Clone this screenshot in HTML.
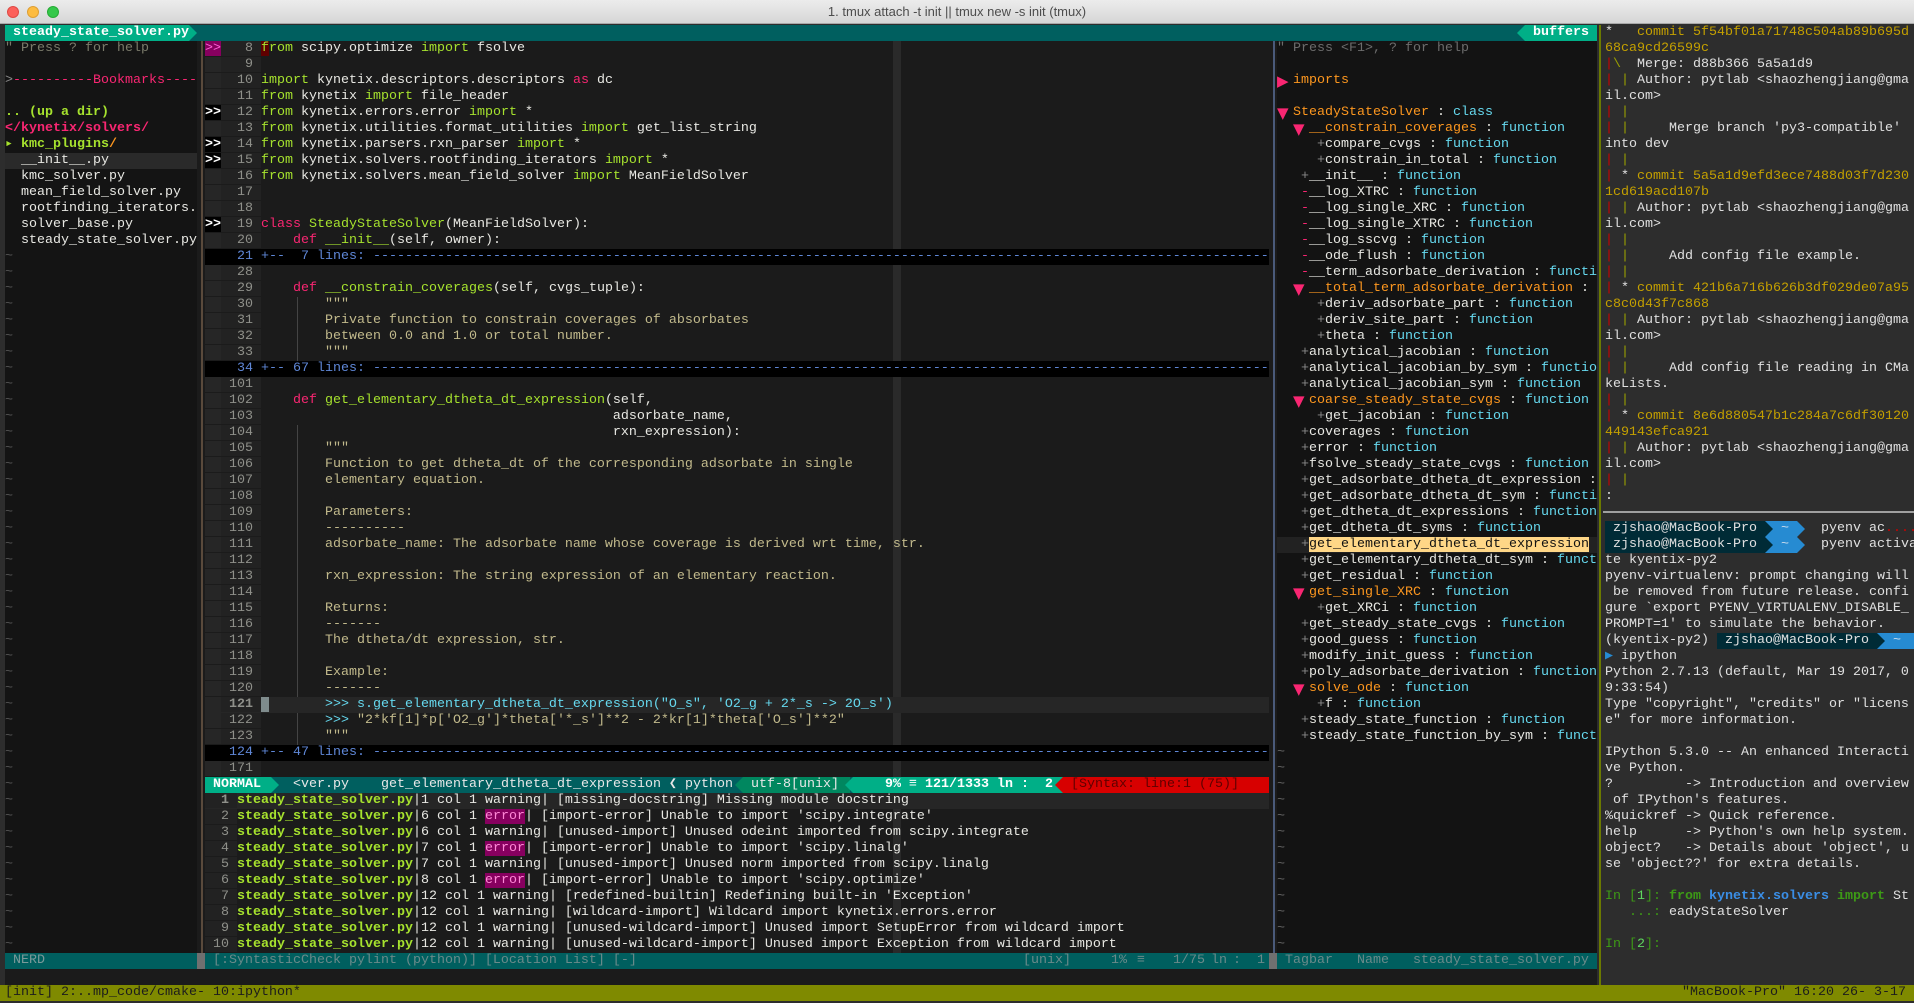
<!DOCTYPE html>
<html><head><meta charset="utf-8"><style>
*{margin:0;padding:0;box-sizing:border-box}
body{width:1914px;height:1003px;background:#2d2d2d;overflow:hidden;position:relative;font-family:"Liberation Mono","DejaVu Sans Mono",monospace;font-size:13.333px;line-height:16px;color:#e8e8e3}
.a{position:absolute}
.l{height:16px;white-space:pre;overflow:hidden}
i{font-style:normal}
.g{color:#a6e22e}.p{color:#f92672}.c{color:#66d9ef}.d{color:#c2ba8c}.o{color:#fd971f}.m{color:#7a7a6a}.gr{color:#8a8a8a}.b{font-weight:bold}
.s{background:#262626}
.n{background:#222;color:#8f908a}
.f{background:#000;color:#5f87d7}
.f .n{background:#000;color:#5f87d7}
.tri{display:inline-block;width:16px;color:#f92672;font-size:15px;line-height:16px;vertical-align:top;font-family:"DejaVu Sans",sans-serif}
.y{color:#c4a000}.r{color:#cc0000}.gg{color:#9aa000}
</style></head><body>
<!-- title bar -->
<div class="a" style="left:0;top:0;width:1914px;height:24px;background:linear-gradient(#ececec,#d6d6d6);border-bottom:1px solid #a8a8a8"></div>
<div class="a" style="left:7px;top:6px;width:12px;height:12px;border-radius:50%;background:#fc605b;border:1px solid #de4a45"></div>
<div class="a" style="left:27px;top:6px;width:12px;height:12px;border-radius:50%;background:#fdbc40;border:1px solid #de9f34"></div>
<div class="a" style="left:47px;top:6px;width:12px;height:12px;border-radius:50%;background:#34c84a;border:1px solid #27aa35"></div>
<div class="a" style="left:0;top:4px;width:1914px;text-align:center;font-family:'Liberation Sans',sans-serif;font-size:13px;color:#4d4d4d">1. tmux attach -t init || tmux new -s init (tmux)</div>

<!-- vim pane backgrounds -->
<div class="a" style="left:5px;top:25px;width:1592px;height:944px;background:#1b1b1b"></div>
<div class="a" style="left:5px;top:41px;width:192px;height:912px;background:#141414"></div>
<div class="a" style="left:1277px;top:41px;width:320px;height:912px;background:#131313"></div>
<div class="a" style="left:201px;top:41px;width:2px;height:912px;background:#5a4a3c"></div>
<div class="a" style="left:1273px;top:41px;width:2px;height:912px;background:#4a5a7a"></div>
<div class="a" style="left:893px;top:41px;width:8px;height:912px;background:#2a2a2a"></div>
<div class="a" style="left:297px;top:297px;width:1px;height:64px;background:#444"></div>
<div class="a" style="left:297px;top:425px;width:1px;height:320px;background:#444"></div>

<!-- tab line -->
<div class="a" style="left:5px;top:25px;width:1592px;height:16px;background:#005f5f"></div>
<div class="a l b" style="left:5px;top:25px;width:192px;background:#00af87;color:#fff;clip-path:polygon(0 0,184px 0,192px 8px,184px 16px,0 16px)"> steady_state_solver.py</div>
<div class="a l b" style="left:1517px;top:25px;width:80px;background:#00af87;color:#fff;clip-path:polygon(8px 0,80px 0,80px 16px,8px 16px,0 8px)">  buffers</div>

<!-- NERDTree -->
<div class="a" style="left:5px;top:41px;width:192px">
<div class="l m">" Press ? for help</div>
<div class="l"></div>
<div class="l"><i class="gr">&gt;</i><i class="p">----------Bookmarks----</i></div>
<div class="l"></div>
<div class="l g b">.. (up a dir)</div>
<div class="l p b">&lt;/kynetix/solvers/</div>
<div class="l g b">▸ kmc_plugins<i class="o">/</i></div>
<div class="l" style="background:#2a2a2a">  __init__.py</div>
<div class="l">  kmc_solver.py</div>
<div class="l">  mean_field_solver.py</div>
<div class="l">  rootfinding_iterators.</div>
<div class="l">  solver_base.py</div>
<div class="l">  steady_state_solver.py</div>
<div class="l" style="color:#555;height:704px;white-space:pre-line">~
~
~
~
~
~
~
~
~
~
~
~
~
~
~
~
~
~
~
~
~
~
~
~
~
~
~
~
~
~
~
~
~
~
~
~
~
~
~
~
~
~
~
~
</div>
</div>

<!-- editor -->
<div class="a" style="left:205px;top:41px;width:1064px;overflow:hidden">
<div class="l"><i class="s" style="background:#87005f;color:#ff5fd7">&gt;&gt;</i><i class="n">   8 </i><i class="g" style="background:#5f0000">f</i><i class="g">rom</i> scipy.optimize <i class="g">import</i> fsolve</div>
<div class="l"><i class="s">  </i><i class="n">   9 </i></div>
<div class="l"><i class="s">  </i><i class="n">  10 </i><i class="g">import</i> kynetix.descriptors.descriptors <i class="p">as</i> dc</div>
<div class="l"><i class="s">  </i><i class="n">  11 </i><i class="g">from</i> kynetix <i class="g">import</i> file_header</div>
<div class="l"><i class="s b" style="background:#000;color:#fff">&gt;&gt;</i><i class="n">  12 </i><i class="g">from</i> kynetix.errors.error <i class="g">import</i> *</div>
<div class="l"><i class="s">  </i><i class="n">  13 </i><i class="g">from</i> kynetix.utilities.format_utilities <i class="g">import</i> get_list_string</div>
<div class="l"><i class="s b" style="background:#000;color:#fff">&gt;&gt;</i><i class="n">  14 </i><i class="g">from</i> kynetix.parsers.rxn_parser <i class="g">import</i> *</div>
<div class="l"><i class="s b" style="background:#000;color:#fff">&gt;&gt;</i><i class="n">  15 </i><i class="g">from</i> kynetix.solvers.rootfinding_iterators <i class="g">import</i> *</div>
<div class="l"><i class="s">  </i><i class="n">  16 </i><i class="g">from</i> kynetix.solvers.mean_field_solver <i class="g">import</i> MeanFieldSolver</div>
<div class="l"><i class="s">  </i><i class="n">  17 </i></div>
<div class="l"><i class="s">  </i><i class="n">  18 </i></div>
<div class="l"><i class="s b" style="background:#000;color:#fff">&gt;&gt;</i><i class="n">  19 </i><i class="p">class</i> <i class="g">SteadyStateSolver</i>(MeanFieldSolver):</div>
<div class="l"><i class="s">  </i><i class="n">  20 </i>    <i class="p">def</i> <i class="g">__init__</i>(self, owner):</div>
<div class="l f"><i class="s" style="background:#000">  </i><i class="n">  21 </i>+--  7 lines: ------------------------------------------------------------------------------------------------------------------------</div>
<div class="l"><i class="s">  </i><i class="n">  28 </i></div>
<div class="l"><i class="s">  </i><i class="n">  29 </i>    <i class="p">def</i> <i class="g">__constrain_coverages</i>(self, cvgs_tuple):</div>
<div class="l d"><i class="s">  </i><i class="n">  30 </i>        """</div>
<div class="l d"><i class="s">  </i><i class="n">  31 </i>        Private function to constrain coverages of absorbates</div>
<div class="l d"><i class="s">  </i><i class="n">  32 </i>        between 0.0 and 1.0 or total number.</div>
<div class="l d"><i class="s">  </i><i class="n">  33 </i>        """</div>
<div class="l f"><i class="s" style="background:#000">  </i><i class="n">  34 </i>+-- 67 lines: ------------------------------------------------------------------------------------------------------------------------</div>
<div class="l"><i class="s">  </i><i class="n"> 101 </i></div>
<div class="l"><i class="s">  </i><i class="n"> 102 </i>    <i class="p">def</i> <i class="g">get_elementary_dtheta_dt_expression</i>(self,</div>
<div class="l"><i class="s">  </i><i class="n"> 103 </i>                                            adsorbate_name,</div>
<div class="l"><i class="s">  </i><i class="n"> 104 </i>                                            rxn_expression):</div>
<div class="l d"><i class="s">  </i><i class="n"> 105 </i>        """</div>
<div class="l d"><i class="s">  </i><i class="n"> 106 </i>        Function to get dtheta_dt of the corresponding adsorbate in single</div>
<div class="l d"><i class="s">  </i><i class="n"> 107 </i>        elementary equation.</div>
<div class="l d"><i class="s">  </i><i class="n"> 108 </i></div>
<div class="l d"><i class="s">  </i><i class="n"> 109 </i>        Parameters:</div>
<div class="l d"><i class="s">  </i><i class="n"> 110 </i>        ----------</div>
<div class="l d"><i class="s">  </i><i class="n"> 111 </i>        adsorbate_name: The adsorbate name whose coverage is derived wrt time, str.</div>
<div class="l d"><i class="s">  </i><i class="n"> 112 </i></div>
<div class="l d"><i class="s">  </i><i class="n"> 113 </i>        rxn_expression: The string expression of an elementary reaction.</div>
<div class="l d"><i class="s">  </i><i class="n"> 114 </i></div>
<div class="l d"><i class="s">  </i><i class="n"> 115 </i>        Returns:</div>
<div class="l d"><i class="s">  </i><i class="n"> 116 </i>        -------</div>
<div class="l d"><i class="s">  </i><i class="n"> 117 </i>        The dtheta/dt expression, str.</div>
<div class="l d"><i class="s">  </i><i class="n"> 118 </i></div>
<div class="l d"><i class="s">  </i><i class="n"> 119 </i>        Example:</div>
<div class="l d"><i class="s">  </i><i class="n"> 120 </i>        -------</div>
<div class="l c" style="background:#262626"><i class="s">  </i><i class="n o b"> 121 </i><i style="background:#7f8c8d"> </i>       &gt;&gt;&gt; s.get_elementary_dtheta_dt_expression("O_s", 'O2_g + 2*_s -&gt; 2O_s')</div>
<div class="l d"><i class="s">  </i><i class="n"> 122 </i>        <i class="c">&gt;&gt;&gt;</i> "2*kf[1]*p['O2_g']*theta['*_s']**2 - 2*kr[1]*theta['O_s']**2"</div>
<div class="l d"><i class="s">  </i><i class="n"> 123 </i>        """</div>
<div class="l f"><i class="s" style="background:#000">  </i><i class="n"> 124 </i>+-- 47 lines: ------------------------------------------------------------------------------------------------------------------------</div>
<div class="l"><i class="s">  </i><i class="n"> 171 </i></div>
<!-- statusline -->
<div class="l" style="position:relative;background:#005f5f;color:#e8e8e8">
 <div class="a b" style="left:0;top:0;width:74px;height:16px;background:#00af87;color:#fff;clip-path:polygon(0 0,66px 0,74px 8px,66px 16px,0 16px)"> NORMAL</div>
 <div class="a" style="left:88px;top:0">&lt;ver.py</div>
 <div class="a" style="left:176px;top:0">get_elementary_dtheta_dt_expression ❮ python</div>
 <div class="a" style="left:530px;top:0;width:115px;height:16px;background:#00875f;clip-path:polygon(8px 0,115px 0,115px 16px,8px 16px,0 8px)">  utf-8[unix]</div>
 <div class="a b" style="left:640px;top:0;width:220px;height:16px;background:#00af87;color:#fff;clip-path:polygon(8px 0,220px 0,220px 16px,8px 16px,0 8px)"><span class="a" style="left:40px">9%</span><span class="a" style="left:64px">≡</span><span class="a" style="left:80px">121/1333</span><span class="a" style="left:152px">ln</span><span class="a" style="left:176px">:</span><span class="a" style="left:200px">2</span></div>
 <div class="a" style="left:850px;top:0;width:214px;height:16px;background:#d70000;color:#5f0000;clip-path:polygon(8px 0,214px 0,214px 16px,8px 16px,0 8px)">  [Syntax: line:1 (75)]</div>
</div>
<!-- loclist -->
<div class="l" style="background:#262626"><i class="n o b">  1 </i><i class="g b">steady_state_solver.py</i>|1 col 1 warning| [missing-docstring] Missing module docstring</div>
<div class="l"><i class="n">  2 </i><i class="g b">steady_state_solver.py</i>|6 col 1 <i style="background:#87005f;color:#ff87d7">error</i>| [import-error] Unable to import 'scipy.integrate'</div>
<div class="l"><i class="n">  3 </i><i class="g b">steady_state_solver.py</i>|6 col 1 warning| [unused-import] Unused odeint imported from scipy.integrate</div>
<div class="l"><i class="n">  4 </i><i class="g b">steady_state_solver.py</i>|7 col 1 <i style="background:#87005f;color:#ff87d7">error</i>| [import-error] Unable to import 'scipy.linalg'</div>
<div class="l"><i class="n">  5 </i><i class="g b">steady_state_solver.py</i>|7 col 1 warning| [unused-import] Unused norm imported from scipy.linalg</div>
<div class="l"><i class="n">  6 </i><i class="g b">steady_state_solver.py</i>|8 col 1 <i style="background:#87005f;color:#ff87d7">error</i>| [import-error] Unable to import 'scipy.optimize'</div>
<div class="l"><i class="n">  7 </i><i class="g b">steady_state_solver.py</i>|12 col 1 warning| [redefined-builtin] Redefining built-in 'Exception'</div>
<div class="l"><i class="n">  8 </i><i class="g b">steady_state_solver.py</i>|12 col 1 warning| [wildcard-import] Wildcard import kynetix.errors.error</div>
<div class="l"><i class="n">  9 </i><i class="g b">steady_state_solver.py</i>|12 col 1 warning| [unused-wildcard-import] Unused import SetupError from wildcard import</div>
<div class="l"><i class="n"> 10 </i><i class="g b">steady_state_solver.py</i>|12 col 1 warning| [unused-wildcard-import] Unused import Exception from wildcard import</div>
</div>

<!-- Tagbar -->
<div class="a" style="left:1277px;top:41px;width:320px;overflow:hidden">
<div class="l" style="color:#6c6c6c">" Press &lt;F1&gt;, ? for help</div>
<div class="l"></div>
<div class="l"><i class="tri">▶</i><i class="o">imports</i></div>
<div class="l"></div>
<div class="l"><i class="tri">▼</i><i class="o">SteadyStateSolver</i> : <i class="c">class</i></div>
<div class="l">  <i class="tri">▼</i><i class="o">__constrain_coverages</i> : <i class="c">function</i></div>
<div class="l">     <i class="gr">+</i>compare_cvgs : <i class="c">function</i></div>
<div class="l">     <i class="gr">+</i>constrain_in_total : <i class="c">function</i></div>
<div class="l">   <i class="gr">+</i>__init__ : <i class="c">function</i></div>
<div class="l">   <i class="p">-</i>__log_XTRC : <i class="c">function</i></div>
<div class="l">   <i class="p">-</i>__log_single_XRC : <i class="c">function</i></div>
<div class="l">   <i class="p">-</i>__log_single_XTRC : <i class="c">function</i></div>
<div class="l">   <i class="p">-</i>__log_sscvg : <i class="c">function</i></div>
<div class="l">   <i class="p">-</i>__ode_flush : <i class="c">function</i></div>
<div class="l">   <i class="p">-</i>__term_adsorbate_derivation : <i class="c">functi</i></div>
<div class="l">  <i class="tri">▼</i><i class="o">__total_term_adsorbate_derivation</i> :</div>
<div class="l">     <i class="gr">+</i>deriv_adsorbate_part : <i class="c">function</i></div>
<div class="l">     <i class="gr">+</i>deriv_site_part : <i class="c">function</i></div>
<div class="l">     <i class="gr">+</i>theta : <i class="c">function</i></div>
<div class="l">   <i class="gr">+</i>analytical_jacobian : <i class="c">function</i></div>
<div class="l">   <i class="gr">+</i>analytical_jacobian_by_sym : <i class="c">functio</i></div>
<div class="l">   <i class="gr">+</i>analytical_jacobian_sym : <i class="c">function</i></div>
<div class="l">  <i class="tri">▼</i><i class="o">coarse_steady_state_cvgs</i> : <i class="c">function</i></div>
<div class="l">     <i class="gr">+</i>get_jacobian : <i class="c">function</i></div>
<div class="l">   <i class="gr">+</i>coverages : <i class="c">function</i></div>
<div class="l">   <i class="gr">+</i>error : <i class="c">function</i></div>
<div class="l">   <i class="gr">+</i>fsolve_steady_state_cvgs : <i class="c">function</i></div>
<div class="l">   <i class="gr">+</i>get_adsorbate_dtheta_dt_expression :</div>
<div class="l">   <i class="gr">+</i>get_adsorbate_dtheta_dt_sym : <i class="c">functi</i></div>
<div class="l">   <i class="gr">+</i>get_dtheta_dt_expressions : <i class="c">function</i></div>
<div class="l">   <i class="gr">+</i>get_dtheta_dt_syms : <i class="c">function</i></div>
<div class="l" style="background:#222">   <i class="gr">+</i><i style="background:#ffd787;color:#111">get_elementary_dtheta_dt_expression</i></div>
<div class="l">   <i class="gr">+</i>get_elementary_dtheta_dt_sym : <i class="c">funct</i></div>
<div class="l">   <i class="gr">+</i>get_residual : <i class="c">function</i></div>
<div class="l">  <i class="tri">▼</i><i class="o">get_single_XRC</i> : <i class="c">function</i></div>
<div class="l">     <i class="gr">+</i>get_XRCi : <i class="c">function</i></div>
<div class="l">   <i class="gr">+</i>get_steady_state_cvgs : <i class="c">function</i></div>
<div class="l">   <i class="gr">+</i>good_guess : <i class="c">function</i></div>
<div class="l">   <i class="gr">+</i>modify_init_guess : <i class="c">function</i></div>
<div class="l">   <i class="gr">+</i>poly_adsorbate_derivation : <i class="c">function</i></div>
<div class="l">  <i class="tri">▼</i><i class="o">solve_ode</i> : <i class="c">function</i></div>
<div class="l">     <i class="gr">+</i>f : <i class="c">function</i></div>
<div class="l">   <i class="gr">+</i>steady_state_function : <i class="c">function</i></div>
<div class="l">   <i class="gr">+</i>steady_state_function_by_sym : <i class="c">funct</i></div>
<div class="l" style="color:#666;height:208px;white-space:pre-line">~
~
~
~
~
~
~
~
~
~
~
~
~
</div>
</div>

<!-- bottom status row -->
<div class="a l" style="left:5px;top:953px;width:192px;background:#005f5f;color:#7a9a9a"> NERD</div>
<div class="a" style="left:197px;top:953px;width:8px;height:16px;background:#707070"></div>
<div class="a l" style="left:205px;top:953px;width:1064px;background:#005f5f;color:#6a8a8a"> [:SyntasticCheck pylint (python)] [Location List] [-]
 <span class="a" style="left:818px;top:0">[unix]</span><span class="a" style="left:906px;top:0">1%</span><span class="a" style="left:932px;top:0">≡</span><span class="a" style="left:968px;top:0">1/75</span><span class="a" style="left:1006px;top:0">ln</span><span class="a" style="left:1028px;top:0">:</span><span class="a" style="left:1052px;top:0">1</span></div>
<div class="a" style="left:1269px;top:953px;width:8px;height:16px;background:#707070"></div>
<div class="a l" style="left:1277px;top:953px;width:320px;background:#005f5f;color:#6a8a8a"> Tagbar   Name   steady_state_solver.py</div>
<div class="a" style="left:5px;top:969px;width:1592px;height:16px;background:#1b1b1b"></div>

<!-- tmux separator -->
<div class="a" style="left:1599px;top:25px;width:2px;height:960px;background:#6b7a00"></div>
<div class="a" style="left:1603px;top:511px;width:311px;height:2px;background:#a0a0a0"></div>

<!-- right pane -->
<div class="a" style="left:1605px;top:25px;width:309px;overflow:hidden;color:#e0e0e0">
<div class="l">*   <i class="y">commit 5f54bf01a71748c504ab89b695d</i></div>
<div class="l y">68ca9cd26599c</div>
<div class="l"><i class="r">|</i><i class="gg">\</i>  Merge: d88b366 5a5a1d9</div>
<div class="l"><i class="r">|</i> <i class="gg">|</i> Author: pytlab &lt;shaozhengjiang@gma</div>
<div class="l">il.com&gt;</div>
<div class="l"><i class="r">|</i> <i class="gg">|</i></div>
<div class="l"><i class="r">|</i> <i class="gg">|</i>     Merge branch 'py3-compatible'</div>
<div class="l">into dev</div>
<div class="l"><i class="r">|</i> <i class="gg">|</i></div>
<div class="l"><i class="r">|</i> * <i class="y">commit 5a5a1d9efd3ece7488d03f7d230</i></div>
<div class="l y">1cd619acd107b</div>
<div class="l"><i class="r">|</i> <i class="gg">|</i> Author: pytlab &lt;shaozhengjiang@gma</div>
<div class="l">il.com&gt;</div>
<div class="l"><i class="r">|</i> <i class="gg">|</i></div>
<div class="l"><i class="r">|</i> <i class="gg">|</i>     Add config file example.</div>
<div class="l"><i class="r">|</i> <i class="gg">|</i></div>
<div class="l"><i class="r">|</i> * <i class="y">commit 421b6a716b626b3df029de07a95</i></div>
<div class="l y">c8c0d43f7c868</div>
<div class="l"><i class="r">|</i> <i class="gg">|</i> Author: pytlab &lt;shaozhengjiang@gma</div>
<div class="l">il.com&gt;</div>
<div class="l"><i class="r">|</i> <i class="gg">|</i></div>
<div class="l"><i class="r">|</i> <i class="gg">|</i>     Add config file reading in CMa</div>
<div class="l">keLists.</div>
<div class="l"><i class="r">|</i> <i class="gg">|</i></div>
<div class="l"><i class="r">|</i> * <i class="y">commit 8e6d880547b1c284a7c6df30120</i></div>
<div class="l y">449143efca921</div>
<div class="l"><i class="r">|</i> <i class="gg">|</i> Author: pytlab &lt;shaozhengjiang@gma</div>
<div class="l">il.com&gt;</div>
<div class="l"><i class="r">|</i> <i class="gg">|</i></div>
<div class="l">:</div>
<div class="l"></div>
<div class="l" style="position:relative"><div class="a" style="left:160px;top:0;width:40px;height:16px;background:#268bd2;clip-path:polygon(0 0,32px 0,40px 8px,32px 16px,0 16px)"></div><div class="a" style="left:0;top:0;width:168px;height:16px;background:#002b36;clip-path:polygon(0 0,160px 0,168px 8px,160px 16px,0 16px)"></div><div class="a" style="left:0;top:0"> zjshao@MacBook-Pro   <i style="color:#cde">~</i>    pyenv ac<i class="r">....</i></div></div>
<div class="l" style="position:relative"><div class="a" style="left:160px;top:0;width:40px;height:16px;background:#268bd2;clip-path:polygon(0 0,32px 0,40px 8px,32px 16px,0 16px)"></div><div class="a" style="left:0;top:0;width:168px;height:16px;background:#002b36;clip-path:polygon(0 0,160px 0,168px 8px,160px 16px,0 16px)"></div><div class="a" style="left:0;top:0"> zjshao@MacBook-Pro   <i style="color:#cde">~</i>    pyenv activa</div></div>
<div class="l">te kyentix-py2</div>
<div class="l">pyenv-virtualenv: prompt changing will</div>
<div class="l"> be removed from future release. confi</div>
<div class="l">gure `export PYENV_VIRTUALENV_DISABLE_</div>
<div class="l">PROMPT=1' to simulate the behavior.</div>
<div class="l" style="position:relative"><div class="a" style="left:272px;top:0;width:40px;height:16px;background:#268bd2"></div><div class="a" style="left:112px;top:0;width:168px;height:16px;background:#002b36;clip-path:polygon(0 0,160px 0,168px 8px,160px 16px,0 16px)"></div><div class="a" style="left:0;top:0">(kyentix-py2)  zjshao@MacBook-Pro   <i style="color:#cde">~</i></div></div>
<div class="l"><i style="color:#268bd2">▶</i> ipython</div>
<div class="l">Python 2.7.13 (default, Mar 19 2017, 0</div>
<div class="l">9:33:54)</div>
<div class="l">Type "copyright", "credits" or "licens</div>
<div class="l">e" for more information.</div>
<div class="l"></div>
<div class="l">IPython 5.3.0 -- An enhanced Interacti</div>
<div class="l">ve Python.</div>
<div class="l">?         -&gt; Introduction and overview</div>
<div class="l"> of IPython's features.</div>
<div class="l">%quickref -&gt; Quick reference.</div>
<div class="l">help      -&gt; Python's own help system.</div>
<div class="l">object?   -&gt; Details about 'object', u</div>
<div class="l">se 'object??' for extra details.</div>
<div class="l"></div>
<div class="l"><i style="color:#3d9a16">In [</i><i style="color:#5fd75f">1</i><i style="color:#3d9a16">]: </i><i class="b" style="color:#3d9a16">from</i> <i class="b" style="color:#3a8ee6">kynetix.solvers</i> <i class="b" style="color:#3d9a16">import</i> St</div>
<div class="l">   <i style="color:#3d9a16">...:</i> eadyStateSolver</div>
<div class="l"></div>
<div class="l"><i style="color:#3d9a16">In [</i><i style="color:#5fd75f">2</i><i style="color:#3d9a16">]: </i></div>
</div>

<!-- tmux status -->
<div class="a l" style="left:0;top:985px;width:1914px;background:#7f8a00;color:#1c1c1c;padding-left:5px">[init] 2:..mp_code/cmake- 10:ipython*</div>
<div class="a l" style="right:8px;top:985px;color:#1c1c1c">"MacBook-Pro" 16:20 26- 3-17</div>
</body></html>
